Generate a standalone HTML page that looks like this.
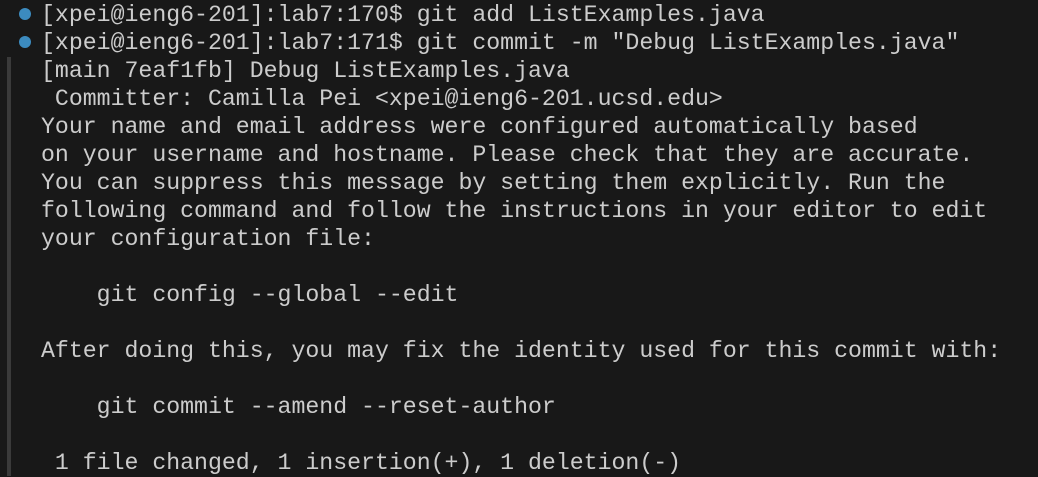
<!DOCTYPE html>
<html><head><style>
html,body{margin:0;padding:0;width:1038px;height:476px;background:#181818;overflow:hidden}
pre{position:absolute;left:41px;top:1px;margin:0;font-family:"Liberation Mono",monospace;font-size:23.2px;line-height:28px;color:#cccccc;white-space:pre}
.dot{position:absolute;left:19px;width:12px;height:12px;border-radius:50%;background:#3c8bbf}
.bar{position:absolute;left:7px;top:57px;width:4px;height:419px;background:#3a3a3a}
</style></head><body>
<div class="dot" style="top:8px"></div>
<div class="dot" style="top:36px"></div>
<div class="bar"></div>
<pre>[xpei@ieng6-201]:lab7:170$ git add ListExamples.java
[xpei@ieng6-201]:lab7:171$ git commit -m "Debug ListExamples.java"
[main 7eaf1fb] Debug ListExamples.java
 Committer: Camilla Pei &lt;xpei@ieng6-201.ucsd.edu&gt;
Your name and email address were configured automatically based
on your username and hostname. Please check that they are accurate.
You can suppress this message by setting them explicitly. Run the
following command and follow the instructions in your editor to edit
your configuration file:

    git config --global --edit

After doing this, you may fix the identity used for this commit with:

    git commit --amend --reset-author

 1 file changed, 1 insertion(+), 1 deletion(-)</pre>
</body></html>
